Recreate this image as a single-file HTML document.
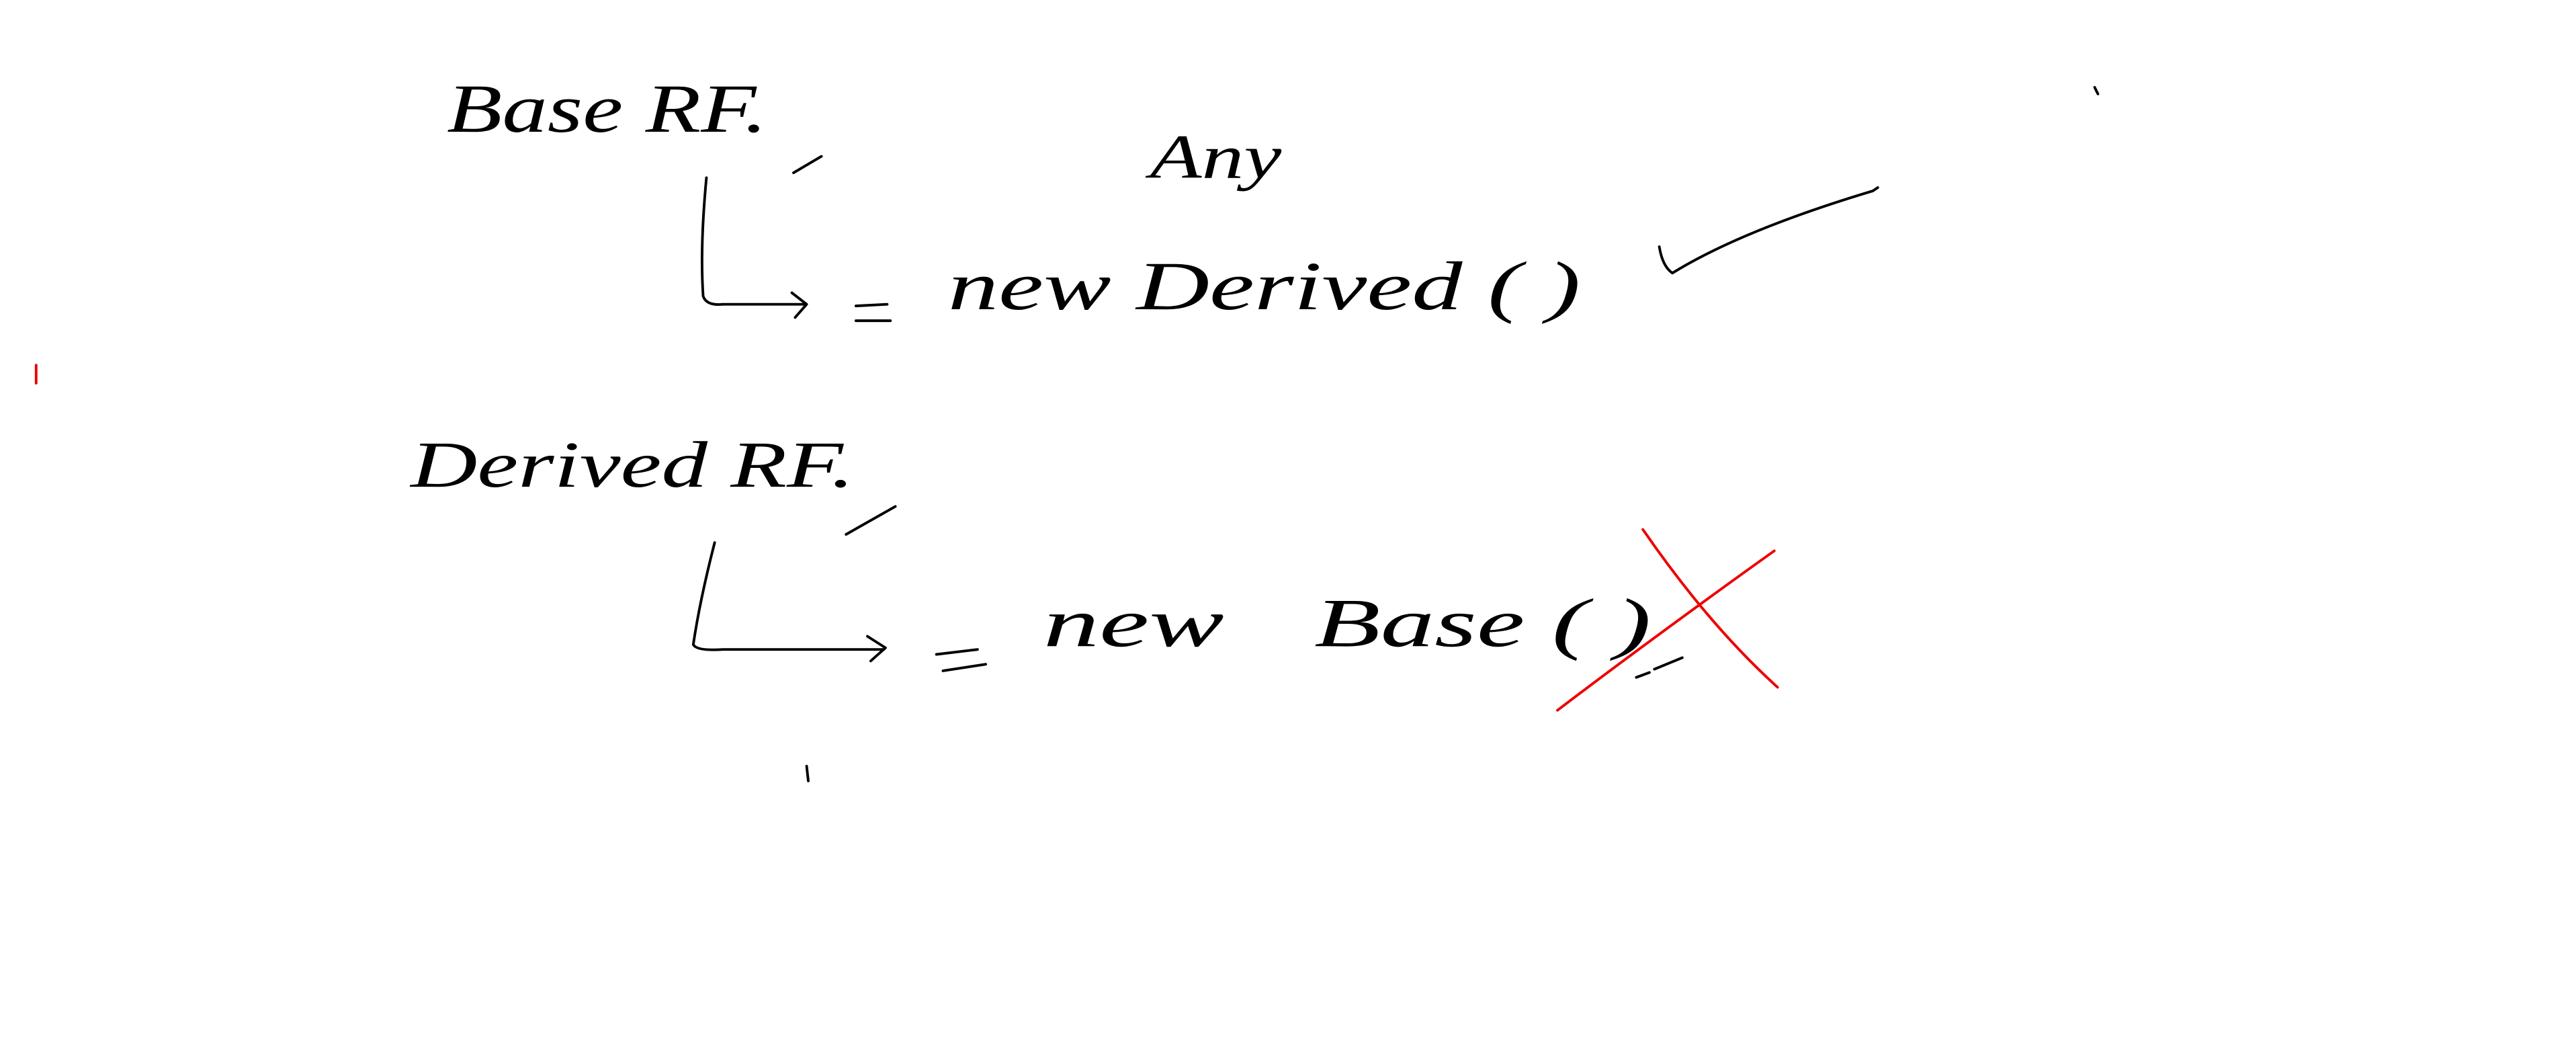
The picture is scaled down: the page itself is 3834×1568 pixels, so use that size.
<!DOCTYPE html>
<html><head><meta charset="utf-8"><style>
html,body{margin:0;padding:0;background:#fff;width:3834px;height:1568px;overflow:hidden}
svg{display:block}
text{font-family:"Liberation Serif",serif;font-style:italic;fill:#000}
</style></head><body>
<svg width="3834" height="1568" viewBox="0 0 1568 641" xmlns="http://www.w3.org/2000/svg">
<rect width="1568" height="641" fill="#fff"/>
<g stroke="#000" stroke-width="1.6" fill="none" stroke-linecap="round" stroke-linejoin="round">
<path d="M430 108 Q426 150 428 180 Q430 186 440 185 L490 185"/>
<path d="M482 178 L491 185 L484 193"/>
<path d="M483 105 L500 95"/>
<path d="M1010 150 Q1012 162 1018 166 Q1060 140 1140 116 L1143 114"/>
<path d="M435 330 Q426 365 422 392 Q424 396 440 395 L538 395"/>
<path d="M528 387 L539 394 L530 402"/>
<path d="M515 325 L545 308"/>
<path d="M1007 407 L1024 400"/>
<path d="M996 412 L1004 409"/>
<path d="M1275 53 L1277 57"/>
<path d="M491 466 L492 475"/>
<path d="M521 186 L540 185 M521 195 L542 195"/>
<path d="M570 398 L595 395 M574 408 L600 404"/>
</g>
<g stroke="#e00" stroke-width="1.6" fill="none" stroke-linecap="round">
<path d="M948 432 Q1010 385 1080 335"/>
<path d="M1000 322 Q1040 380 1082 418"/>
<path d="M22 222 L22 233"/>
</g>
<text x="272" y="80" font-size="42" textLength="195" lengthAdjust="spacingAndGlyphs">Base RF.</text>
<text x="700" y="108" font-size="38" textLength="80" lengthAdjust="spacingAndGlyphs">Any</text>
<text x="577" y="188" font-size="42" textLength="385" lengthAdjust="spacingAndGlyphs">new Derived ( )</text>
<text x="250" y="296" font-size="40" textLength="270" lengthAdjust="spacingAndGlyphs">Derived RF.</text>
<text x="635" y="393" font-size="42" textLength="110" lengthAdjust="spacingAndGlyphs">new</text>
<text x="800" y="393" font-size="42" textLength="205" lengthAdjust="spacingAndGlyphs">Base ( )</text>
</svg>
</body></html>
